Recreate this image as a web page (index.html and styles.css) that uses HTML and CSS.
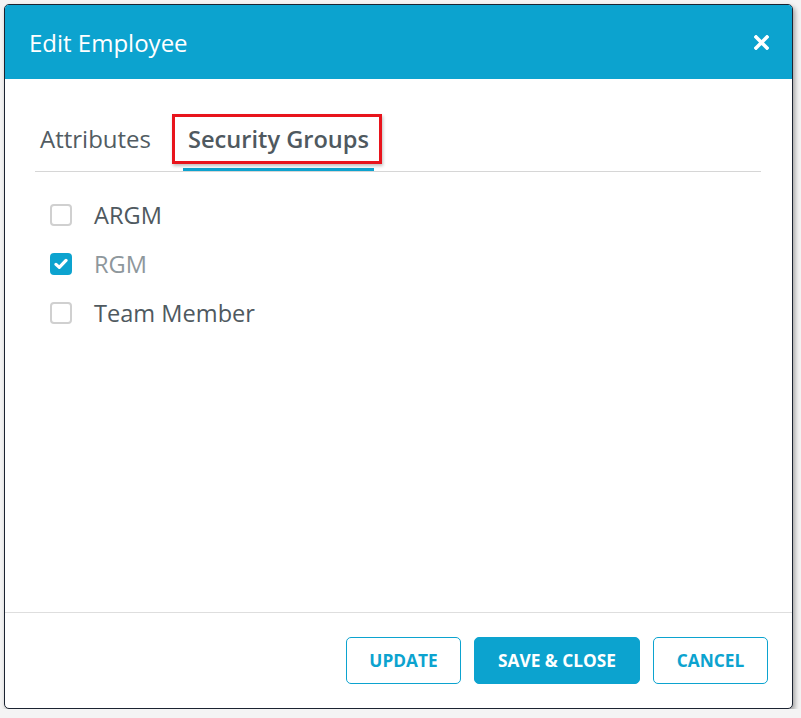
FILE: index.html
```html
<!DOCTYPE html>
<html lang="en">
<head>
<meta charset="utf-8">
<title>Edit Employee</title>
<link rel="stylesheet" href="styles.css">
</head>
<body>
  <div class="dialog">
    <header class="dialog-header">
      <h1 class="dialog-title">Edit Employee</h1>
      <button class="close-btn" aria-label="Close">
        <svg width="15" height="15" viewBox="0 0 15 15">
          <path d="M2 2 L13 13 M13 2 L2 13" stroke="#fff" stroke-width="3.6" stroke-linecap="square" fill="none"/>
        </svg>
      </button>
    </header>

    <main class="dialog-body">
      <nav class="tabs">
        <span class="tab">Attributes</span>
        <span class="tab tab-active">Security Groups<span class="highlight"></span></span>
      </nav>

      <ul class="group-list">
        <li class="group-item">
          <span class="check"></span>
          <span class="group-label">ARGM</span>
        </li>
        <li class="group-item group-item-muted">
          <span class="check check-on">
            <svg width="14" height="12" viewBox="0 0 14 12">
              <path d="M2 6.4 L5.3 9.4 L12 2.4" stroke="#fff" stroke-width="3.2" stroke-linecap="round" stroke-linejoin="round" fill="none"/>
            </svg>
          </span>
          <span class="group-label">RGM</span>
        </li>
        <li class="group-item">
          <span class="check"></span>
          <span class="group-label">Team Member</span>
        </li>
      </ul>
    </main>

    <footer class="dialog-footer">
      <button class="btn btn-outline btn-narrow">UPDATE</button>
      <button class="btn btn-solid btn-wide">SAVE &amp; CLOSE</button>
      <button class="btn btn-outline btn-narrow">CANCEL</button>
    </footer>
  </div>
</body>
</html>
```

FILE: styles.css
```css
* {
  box-sizing: border-box;
}

html,
body {
  margin: 0;
  padding: 0;
  background: #f4f4f4;
}

body {
  padding: 4px 0 0 4px;
  font-family: "Open Sans", "Noto Sans", sans-serif;
}

.dialog {
  width: 789px;
  height: 705px;
  display: flex;
  flex-direction: column;
  background: #ffffff;
  border: 1.5px solid #1b2331;
  border-radius: 5px;
  overflow: hidden;
  box-shadow: 2px 3px 5px rgba(0, 0, 0, 0.35);
}

.dialog-header {
  height: 74px;
  flex: none;
  display: flex;
  align-items: center;
  justify-content: space-between;
  background: #0ca3cf;
  padding: 0 23px 0 24px;
}

.dialog-title {
  margin: 0;
  font-size: 24px;
  font-weight: 400;
  color: #ffffff;
  line-height: 32px;
  padding-top: 1px;
}

.close-btn {
  border: 0;
  background: none;
  padding: 0;
  width: 15px;
  height: 15px;
  display: flex;
}

.dialog-body {
  flex: 1;
  padding: 44px 31px 0 30px;
}

.tabs {
  display: flex;
  gap: 27px;
  border-bottom: 1px solid #d6d6d6;
}

.tab {
  position: relative;
  padding: 0 5px 13px;
  font-size: 24px;
  line-height: 32px;
  color: #525c62;
  border-bottom: 3px solid transparent;
}

.tab-active {
  font-weight: 600;
  color: #4f595f;
  border-bottom-color: #0ca3cf;
  font-size: 23.6px;
}

/* red outline drawn around the active tab */
.highlight {
  position: absolute;
  left: -11px;
  top: -9px;
  width: 210px;
  height: 50px;
  border: 3px solid #e8141c;
  box-shadow: 1px 2px 3px rgba(0, 0, 0, 0.25);
  pointer-events: none;
}

.group-list {
  list-style: none;
  margin: 0;
  padding: 27px 0 0 15px;
  display: flex;
  flex-direction: column;
  gap: 17px;
}

.group-item {
  display: flex;
  align-items: center;
  gap: 22px;
  height: 32px;
}

.check {
  width: 22px;
  height: 22px;
  border: 2px solid #d0d0d0;
  border-radius: 4px;
  display: flex;
  align-items: center;
  justify-content: center;
  flex: none;
}

.check-on {
  background: #0ca3cf;
  border-color: #0ca3cf;
}

.group-label {
  font-size: 23.6px;
  line-height: 32px;
  color: #4f595f;
}

.group-item-muted .group-label {
  color: #8e979c;
}

.dialog-footer {
  flex: none;
  border-top: 1px solid #dedede;
  display: flex;
  justify-content: flex-end;
  gap: 13px;
  padding: 24px 24px 24px 0;
}

.btn {
  height: 47px;
  border-radius: 5px;
  font-family: "Open Sans", "Noto Sans", sans-serif;
  font-size: 17.3px;
  font-weight: 700;
  cursor: pointer;
}

.btn-narrow {
  width: 115px;
}

.btn-wide {
  width: 166px;
}

.btn-outline {
  background: #ffffff;
  color: #0ca3cf;
  border: 1px solid #0ca3cf;
}

.btn-solid {
  background: #0ca3cf;
  color: #ffffff;
  border: 1px solid #0ca3cf;
}
```
